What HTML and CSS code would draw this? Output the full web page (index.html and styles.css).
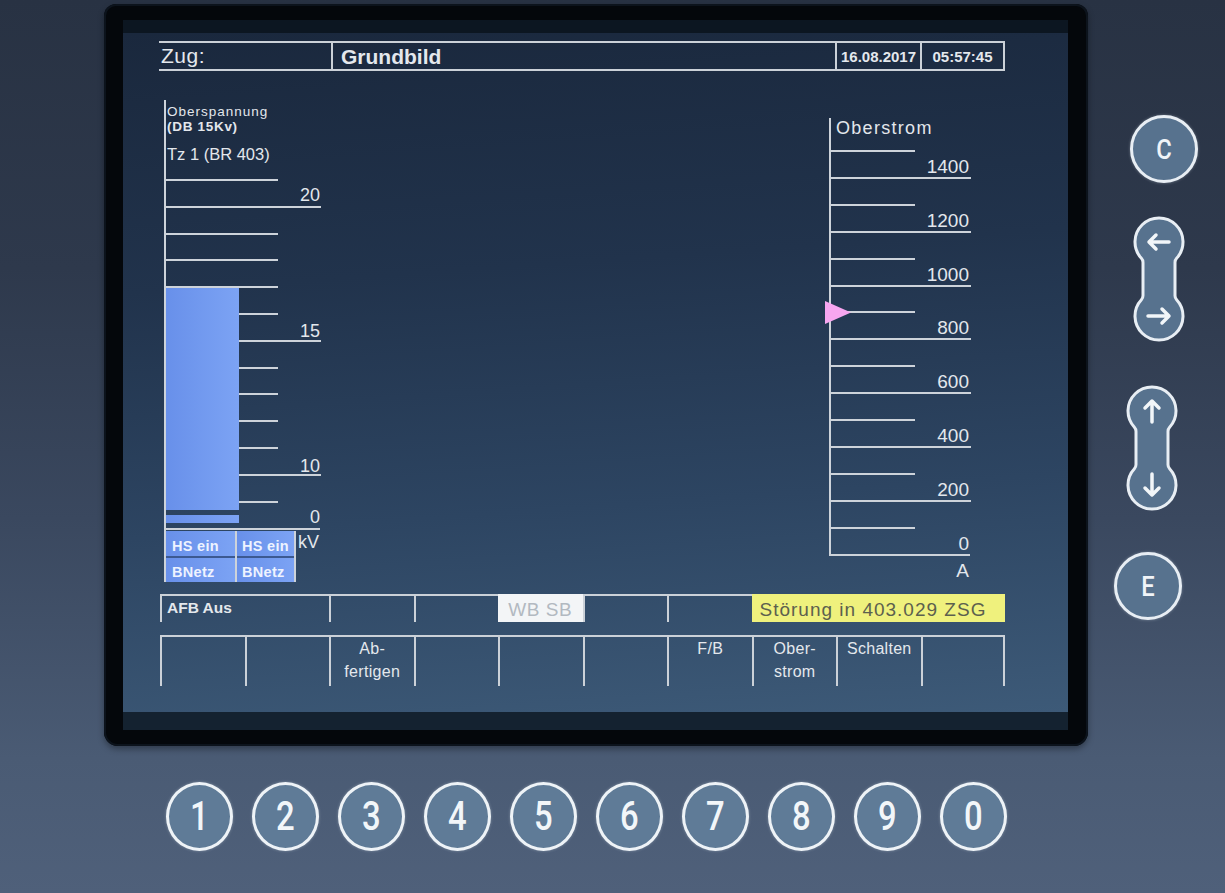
FILE: index.html
```html
<!DOCTYPE html>
<html lang="de">
<head>
    <meta charset="UTF-8">
    <title>Grundbild</title>
    <link rel="stylesheet" href="styles.css">
</head>
<body>
<div class="console">
    <div class="top-row">
        <div class="bezel">
            <div class="screen">
                <div class="header">
                    <div class="hcell zug">Zug:</div>
                    <div class="hcell title">Grundbild</div>
                    <div class="hcell stamp">16.08.2017</div>
                    <div class="hcell stamp">05:57:45</div>
                </div>

                <div class="gauges">
                    <!-- Oberspannung -->
                    <svg class="gauge" width="172" height="523" viewBox="159 71 172 523">
                        <defs>
                            <linearGradient id="barFill" x1="0" y1="0" x2="1" y2="0">
                                <stop offset="0" stop-color="#6890ea"/>
                                <stop offset="1" stop-color="#7ca3f4"/>
                            </linearGradient>
                        </defs>
                        <line class="ln" x1="165" y1="100" x2="165" y2="582"/>
                        <text class="t-small" x="167" y="116">Oberspannung</text>
                        <text class="t-small bold" x="167" y="131">(DB 15Kv)</text>
                        <text class="t-mid" x="167" y="160">Tz 1 (BR 403)</text>

                        <line class="ln" x1="165" y1="180" x2="278" y2="180"/>
                        <line class="ln" x1="165" y1="207" x2="321" y2="207"/>
                        <line class="ln" x1="165" y1="234" x2="278" y2="234"/>
                        <line class="ln" x1="165" y1="260" x2="278" y2="260"/>
                        <line class="ln" x1="165" y1="287" x2="278" y2="287"/>
                        <line class="ln" x1="165" y1="314" x2="278" y2="314"/>
                        <line class="ln" x1="165" y1="341" x2="321" y2="341"/>
                        <line class="ln" x1="165" y1="368" x2="278" y2="368"/>
                        <line class="ln" x1="165" y1="394" x2="278" y2="394"/>
                        <line class="ln" x1="165" y1="421" x2="278" y2="421"/>
                        <line class="ln" x1="165" y1="448" x2="278" y2="448"/>
                        <line class="ln" x1="165" y1="475" x2="321" y2="475"/>
                        <line class="ln" x1="165" y1="502" x2="278" y2="502"/>
                        <line class="ln" x1="165" y1="529" x2="320" y2="529"/>

                        <rect x="166" y="288" width="73" height="222" fill="url(#barFill)"/>
                        <rect x="166" y="515" width="73" height="8" fill="url(#barFill)"/>

                        <text class="t-num" x="320" y="201" text-anchor="end">20</text>
                        <text class="t-num" x="320" y="337" text-anchor="end">15</text>
                        <text class="t-num" x="320" y="472" text-anchor="end">10</text>
                        <text class="t-num" x="320" y="523" text-anchor="end">0</text>

                        <rect x="166" y="531" width="70" height="25" fill="url(#barFill)"/>
                        <rect x="237" y="531" width="57" height="25" fill="url(#barFill)"/>
                        <rect x="166" y="558" width="70" height="24" fill="url(#barFill)"/>
                        <rect x="237" y="558" width="57" height="24" fill="url(#barFill)"/>
                        <rect x="166" y="556" width="128" height="2" fill="#3c5991"/>
                        <line class="ln" x1="236" y1="531" x2="236" y2="582"/>
                        <line class="ln" x1="295" y1="531" x2="295" y2="582"/>
                        <text class="t-cell" x="172" y="551">HS ein</text>
                        <text class="t-cell" x="242" y="551">HS ein</text>
                        <text class="t-cell" x="172" y="577">BNetz</text>
                        <text class="t-cell" x="242" y="577">BNetz</text>
                        <text class="t-num" x="298" y="548">kV</text>
                    </svg>

                    <!-- Oberstrom -->
                    <svg class="gauge" width="190" height="523" viewBox="815 71 190 523">
                        <line class="ln" x1="830" y1="118" x2="830" y2="556"/>
                        <text class="t-label" x="836" y="134">Oberstrom</text>

                        <line class="ln" x1="830" y1="151" x2="915" y2="151"/>
                        <line class="ln" x1="830" y1="178" x2="971" y2="178"/>
                        <line class="ln" x1="830" y1="205" x2="915" y2="205"/>
                        <line class="ln" x1="830" y1="232" x2="971" y2="232"/>
                        <line class="ln" x1="830" y1="259" x2="915" y2="259"/>
                        <line class="ln" x1="830" y1="286" x2="971" y2="286"/>
                        <line class="ln" x1="830" y1="312" x2="915" y2="312"/>
                        <line class="ln" x1="830" y1="339" x2="971" y2="339"/>
                        <line class="ln" x1="830" y1="366" x2="915" y2="366"/>
                        <line class="ln" x1="830" y1="393" x2="971" y2="393"/>
                        <line class="ln" x1="830" y1="420" x2="915" y2="420"/>
                        <line class="ln" x1="830" y1="447" x2="971" y2="447"/>
                        <line class="ln" x1="830" y1="474" x2="915" y2="474"/>
                        <line class="ln" x1="830" y1="501" x2="971" y2="501"/>
                        <line class="ln" x1="830" y1="528" x2="915" y2="528"/>
                        <line class="ln" x1="829" y1="555" x2="970" y2="555"/>

                        <text class="t-num big" x="969" y="173" text-anchor="end">1400</text>
                        <text class="t-num big" x="969" y="227" text-anchor="end">1200</text>
                        <text class="t-num big" x="969" y="281" text-anchor="end">1000</text>
                        <text class="t-num big" x="969" y="334" text-anchor="end">800</text>
                        <text class="t-num big" x="969" y="388" text-anchor="end">600</text>
                        <text class="t-num big" x="969" y="442" text-anchor="end">400</text>
                        <text class="t-num big" x="969" y="496" text-anchor="end">200</text>
                        <text class="t-num big" x="969" y="550" text-anchor="end">0</text>
                        <text class="t-num big" x="969" y="577" text-anchor="end">A</text>

                        <polygon points="825,301 851,312.5 825,324" fill="#f7a6f0"/>
                    </svg>
                </div>

                <div class="status-row">
                    <div class="st span2">AFB Aus</div>
                    <div class="st"></div>
                    <div class="st"></div>
                    <div class="st wb">WB SB</div>
                    <div class="st"></div>
                    <div class="st"></div>
                    <div class="st fault">Störung in 403.029 ZSG</div>
                </div>

                <div class="softkeys">
                    <div class="skey"></div>
                    <div class="skey"></div>
                    <div class="skey">Ab-<br>fertigen</div>
                    <div class="skey"></div>
                    <div class="skey"></div>
                    <div class="skey"></div>
                    <div class="skey">F/B</div>
                    <div class="skey">Ober-<br>strom</div>
                    <div class="skey">Schalten</div>
                    <div class="skey last"></div>
                </div>
            </div>
        </div>

        <div class="side-keys">
            <div class="round-key key-c"><span>C</span></div>

            <svg class="pill pill-lr" width="56" height="130" viewBox="0 0 56 130">
                <path class="pill-body" d="M12 48.4 A6 6 0 0 0 10.4 44.3 A24 24 0 1 1 45.6 44.3 A6 6 0 0 0 44 48.4 L44 81.6 A6 6 0 0 0 45.6 85.7 A24 24 0 1 1 10.4 85.7 A6 6 0 0 0 12 81.6 Z"/>
                <path class="arrow" d="M38 28 H18 M25 21 L18 28 L25 35"/>
                <path class="arrow" d="M17 102 H38 M31 95 L38 102 L31 109"/>
            </svg>

            <svg class="pill pill-ud" width="56" height="130" viewBox="0 0 56 130">
                <path class="pill-body" d="M12 48.4 A6 6 0 0 0 10.4 44.3 A24 24 0 1 1 45.6 44.3 A6 6 0 0 0 44 48.4 L44 81.6 A6 6 0 0 0 45.6 85.7 A24 24 0 1 1 10.4 85.7 A6 6 0 0 0 12 81.6 Z"/>
                <path class="arrow" d="M28 39 V18 M21 25 L28 18 L35 25"/>
                <path class="arrow" d="M28 91 V112 M21 105 L28 112 L35 105"/>
            </svg>

            <div class="round-key key-e"><span>E</span></div>
        </div>
    </div>

    <div class="num-keys">
        <div class="num"><span>1</span></div>
        <div class="num"><span>2</span></div>
        <div class="num"><span>3</span></div>
        <div class="num"><span>4</span></div>
        <div class="num"><span>5</span></div>
        <div class="num"><span>6</span></div>
        <div class="num"><span>7</span></div>
        <div class="num"><span>8</span></div>
        <div class="num"><span>9</span></div>
        <div class="num"><span>0</span></div>
    </div>
</div>
</body>
</html>
```

FILE: styles.css
```css
* {
    margin: 0;
    padding: 0;
    box-sizing: border-box;
}

body {
    width: 1225px;
    height: 893px;
    overflow: hidden;
    font-family: 'Liberation Sans', Arial, sans-serif;
    background: linear-gradient(180deg, #283243 0%, #2e394c 30%, #3a485f 58%, #4a5b74 85%, #4f607a 100%);
}

.console {
    padding: 4px 0 0 104px;
}

.top-row {
    display: flex;
}

/* monitor frame */
.bezel {
    width: 984px;
    height: 742px;
    padding: 29px 20px 34px 19px;
    background: #04070b;
    border-radius: 12px 12px 14px 14px;
    box-shadow: inset 0 0 0 2px #0c131c, 0 3px 6px rgba(0, 0, 0, 0.35);
}

.screen {
    width: 945px;
    height: 679px;
    padding: 8px 63px 0 36px;
    color: #e4e8ed;
    background: linear-gradient(176deg, #1a283d 0%, #21334c 35%, #2d4562 68%, #3d5a78 100%);
    box-shadow: 0 -13px 0 #0c1621, 0 18px 0 #142230;
}

/* header */
.header {
    display: grid;
    grid-template-columns: 172px 504px 85px 85px;
    height: 30px;
    border-top: 2px solid #cbd1d8;
    border-bottom: 2px solid #cbd1d8;
}

.hcell {
    border-left: 2px solid #cbd1d8;
    white-space: nowrap;
}

.hcell:last-child {
    border-right: 2px solid #cbd1d8;
}

.zug {
    border-left: none;
    padding-left: 2px;
    font-size: 21px;
    line-height: 26px;
    letter-spacing: 0.5px;
}

.title {
    padding-left: 8px;
    font-size: 21px;
    font-weight: 700;
    line-height: 27px;
}

.stamp {
    text-align: center;
    font-size: 15px;
    font-weight: 700;
    line-height: 27px;
}

/* gauges */
.gauges {
    display: flex;
    justify-content: space-between;
    height: 523px;
}

.gauge .ln {
    stroke: #cdd3da;
    stroke-width: 2;
}

.gauge text {
    fill: #e3e7ec;
    font-family: 'Liberation Sans', Arial, sans-serif;
}

.gauge .t-small {
    font-size: 13.5px;
    letter-spacing: 1px;
}

.gauge .t-small.bold {
    font-weight: 700;
    letter-spacing: 0.7px;
}

.gauge .t-mid {
    font-size: 16.5px;
}

.gauge .t-label {
    font-size: 18px;
    letter-spacing: 1.3px;
}

.gauge .t-num {
    font-size: 18px;
}

.gauge .t-num.big {
    font-size: 19px;
}

.gauge .t-cell {
    fill: #eef3ff;
    font-size: 14.5px;
    font-weight: 700;
    letter-spacing: 0.3px;
}

/* status line */
.status-row {
    display: grid;
    grid-template-columns: repeat(10, 1fr);
    height: 28px;
    margin-left: 1px;
}

.st {
    border-top: 2px solid #cbd1d8;
    border-left: 2px solid #cbd1d8;
    white-space: nowrap;
}

.span2 {
    grid-column: span 2;
    padding: 4px 0 0 5px;
    font-size: 15.5px;
    font-weight: 700;
    line-height: 15px;
}

.wb {
    border: none;
    background: #f3f5f7;
    color: #b2b9c1;
    text-align: center;
    padding-top: 5px;
    font-size: 19px;
    line-height: 22px;
    letter-spacing: 0.6px;
}

.fault {
    grid-column: span 3;
    border: none;
    background: #eff17d;
    color: #5c604e;
    padding: 5px 0 0 8px;
    font-size: 19px;
    line-height: 22px;
    letter-spacing: 1px;
}

/* soft keys */
.softkeys {
    display: grid;
    grid-template-columns: repeat(10, 1fr);
    height: 51px;
    margin: 13px 0 0 1px;
}

.skey {
    border-top: 2px solid #cbd1d8;
    border-left: 2px solid #cbd1d8;
    text-align: center;
    font-size: 16px;
    line-height: 23px;
    letter-spacing: 0.3px;
}

.skey.last {
    border-right: 2px solid #cbd1d8;
}

/* keys on the right */
.side-keys {
    display: flex;
    flex-direction: column;
    align-items: flex-start;
    padding-left: 22px;
}

.round-key {
    width: 68px;
    height: 68px;
    border-radius: 50%;
    border: 3px solid #e8eef4;
    background: #57728e;
    display: flex;
    align-items: center;
    justify-content: center;
    color: #f0f4f8;
    font-family: Roboto, 'Liberation Sans', sans-serif;
    font-size: 28px;
    font-weight: 500;
    box-shadow: 0 0 3px rgba(230, 240, 250, 0.35);
}

.round-key span {
    display: inline-block;
    transform: scaleX(0.85);
}

.key-c {
    margin: 111px 0 0 20px;
}

.key-e {
    margin: 39px 0 0 4px;
}

.pill-lr {
    margin: 31px 0 0 21px;
}

.pill-ud {
    margin: 39px 0 0 14px;
}

.pill-body {
    fill: #57728e;
    stroke: #e8eef4;
    stroke-width: 3;
}

.arrow {
    fill: none;
    stroke: #f2f6f9;
    stroke-width: 3.5;
    stroke-linecap: round;
    stroke-linejoin: round;
}

/* number keys */
.num-keys {
    display: flex;
    gap: 19px;
    margin: 36px 0 0 62px;
}

.num {
    width: 67px;
    height: 69px;
    border-radius: 50%;
    border: 3px solid #eef3f7;
    background: #5f7b97;
    display: flex;
    align-items: center;
    justify-content: center;
    color: #f2f6f9;
    font-family: Roboto, 'Liberation Sans', sans-serif;
    font-size: 40px;
    font-weight: 500;
    box-shadow: 0 0 3px rgba(230, 240, 250, 0.35);
}

.num span {
    display: inline-block;
    transform: scaleX(0.82);
}
```
